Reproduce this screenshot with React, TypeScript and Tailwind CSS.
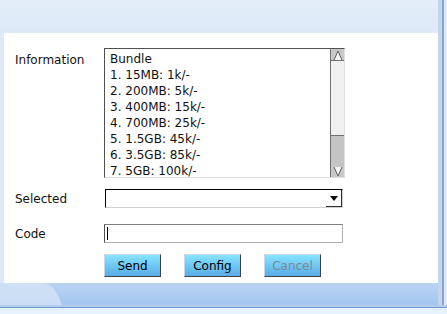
import React from 'react'

const bundles = [
  'Bundle',
  '1. 15MB: 1k/-',
  '2. 200MB: 5k/-',
  '3. 400MB: 15k/-',
  '4. 700MB: 25k/-',
  '5. 1.5GB: 45k/-',
  '6. 3.5GB: 85k/-',
  '7. 5GB: 100k/-',
]

function Btn({ label, disabled }: { label: string; disabled?: boolean }) {
  return (
    <button
      disabled={disabled}
      className={`w-[57px] h-[23px] border border-t-[#c8d8e8] border-l-[#c8d8e8] border-b-[#404040] border-r-[#404040] bg-gradient-to-b from-[#86e4ff] to-[#5aace6] text-[12px] leading-none ${
        disabled ? 'text-[#7a8a96]' : 'text-black'
      }`}
    >
      {label}
    </button>
  )
}

export default function App() {
  return (
    <div className="w-[447px] h-[314px] bg-[#dde9f7] flex flex-col overflow-hidden" style={{ fontFamily: '"DejaVu Sans", sans-serif' }}>
      <div className="flex flex-1">
        <div className="flex flex-col flex-1">
          <div className="h-[33px] bg-gradient-to-b from-[#e4eefa] to-[#dde9f7]" />
          <div className="flex">
            <div className="w-[4px] bg-[#dde9f7]" />
            {/* white panel */}
            <div className="w-[434px] h-[250px] bg-white flex flex-col text-[12px] text-[#111]">
              <div className="flex mt-[15px]">
                <div className="w-[100px] pl-[11px] pt-[3px]">Information</div>
                <div className="w-[241px] h-[130px] border border-[#505050] border-b-[#e0e0e0] border-r-[#e0e0e0] flex">
                  <div className="flex-1 pl-[5px] pt-[2px] overflow-hidden leading-[16px]">
                    {bundles.map((b) => (
                      <div key={b} className="whitespace-nowrap">{b}</div>
                    ))}
                  </div>
                  <div className="w-[14px] flex flex-col border-l border-[#707070]">
                    <div className="h-[12px] bg-[#c8c8c8] border-b border-[#707070] flex items-center justify-center">
                      <svg width="10" height="10" viewBox="0 0 10 10">
                        <path d="M1 10 L5 1 L9 10" fill="#f4f4f4" stroke="#606060" strokeWidth="1" />
                      </svg>
                    </div>
                    <div className="h-[75px] bg-[#f0f0f0] border-b border-[#707070]" />
                    <div className="flex-1 bg-[#c4c4c4]" />
                    <div className="h-[11px] bg-[#c8c8c8] flex items-center justify-center">
                      <svg width="10" height="10" viewBox="0 0 10 10">
                        <path d="M1 0 L5 9 L9 0" fill="#f4f4f4" stroke="#606060" strokeWidth="1" />
                      </svg>
                    </div>
                  </div>
                </div>
              </div>

              <div className="flex items-center mt-[11px]">
                <div className="w-[101px] pl-[11px]">Selected</div>
                <div className="w-[238px] h-[19px] border border-black border-b-[#d0d0d0] border-r-[#d0d0d0] flex justify-end">
                  <div className="w-[16px] border-r border-b border-[#303030] flex items-center justify-center">
                    <svg width="8" height="5" viewBox="0 0 8 5">
                      <path d="M0 0 L8 0 L4 5 Z" fill="#000" />
                    </svg>
                  </div>
                </div>
              </div>

              <div className="flex items-center mt-[16px]">
                <div className="w-[100px] pl-[11px]">Code</div>
                <div className="w-[239px] h-[19px] border border-[#b0b0b0] border-l-[#505050] border-t-[#808080] flex items-center pl-[2px]">
                  <div className="w-px h-[13px] bg-black" />
                </div>
              </div>

              <div className="flex mt-[11px] pl-[100px] gap-[23px]">
                <Btn label="Send" />
                <Btn label="Config" />
                <Btn label="Cancel" disabled />
              </div>
            </div>
          </div>
          <div className="h-[22px] relative bg-gradient-to-b from-[#b9d4f4] to-[#a4c6ef]">
            <svg className="absolute left-0 top-0" width="70" height="22" viewBox="0 0 70 22">
              <path d="M0 0 L45 0 Q55 2 62 22 L0 22 Z" fill="#d2e2f6" opacity="0.85" />
            </svg>
          </div>
        </div>
        <div className="w-[4px] bg-[#c2d6ee]" />
        <div className="w-[2px] bg-[#8aa4cc]" />
        <div className="w-[3px] bg-[#dde9f7]" />
      </div>
      <div className="h-[2px] bg-[#b6cdea]" />
      <div className="h-[1px] bg-[#6f9bd4]" />
      <div className="h-[6px] bg-[#e6f3fc]" />
    </div>
  )
}
